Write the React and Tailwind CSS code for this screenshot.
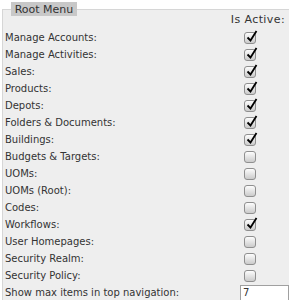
import React from 'react';

const rows = [
  ['Manage Accounts:', true],
  ['Manage Activities:', true],
  ['Sales:', true],
  ['Products:', true],
  ['Depots:', true],
  ['Folders & Documents:', true],
  ['Buildings:', true],
  ['Budgets & Targets:', false],
  ['UOMs:', false],
  ['UOMs (Root):', false],
  ['Codes:', false],
  ['Workflows:', true],
  ['User Homepages:', false],
  ['Security Realm:', false],
  ['Security Policy:', false],
];

function Checkbox({ checked }) {
  return (
    <span className="relative block w-[12px] h-[12px] rounded-[3px] border border-[#8f8f8f] bg-gradient-to-b from-[#fdfdfd] to-[#cbcbcb]">
      {checked && (
        <svg className="absolute left-[1px] top-[-3px]" width="12" height="13" viewBox="0 0 12 13">
          <path d="M1.5 7.5 L4.5 10.5 L10.5 1" fill="none" stroke="#000" strokeWidth="1.8" />
        </svg>
      )}
    </span>
  );
}

export default function App() {
  return (
    <div className="w-[289px] h-[300px] overflow-hidden bg-white pt-[2px] text-[10px] text-[#333]" style={{ fontFamily: '"DejaVu Sans", sans-serif' }}>
      <div className="relative z-10 ml-[11px] w-[66px] h-[14px] bg-[#c8c8c8] flex items-center justify-center leading-none text-[11px] text-[#333]">
        Root Menu
      </div>
      <div className="-mt-[7px] ml-[2px] border-t border-l border-[#d6d6d6] bg-[#eeeeee] pt-[2px] pl-[2px]">
        <div className="h-[17px] flex items-center justify-end pr-[4px] text-[11px] tracking-[0.4px]">Is Active:</div>
        {rows.map(([label, checked]) => (
          <div key={label} className="h-[17px] flex items-center">
            <span className="flex-1">{label}</span>
            <span className="w-[45px]">
              <Checkbox checked={checked} />
            </span>
          </div>
        ))}
        <div className="h-[17px] flex items-center">
          <span className="flex-1">Show max items in top navigation:</span>
          <input
            defaultValue="7"
            className="w-[49px] h-[16px] border border-[#a0a0a0] bg-white px-[2px] text-[10px] text-[#333] outline-none"
            style={{ fontFamily: '"DejaVu Sans", sans-serif' }}
          />
        </div>
      </div>
    </div>
  );
}
